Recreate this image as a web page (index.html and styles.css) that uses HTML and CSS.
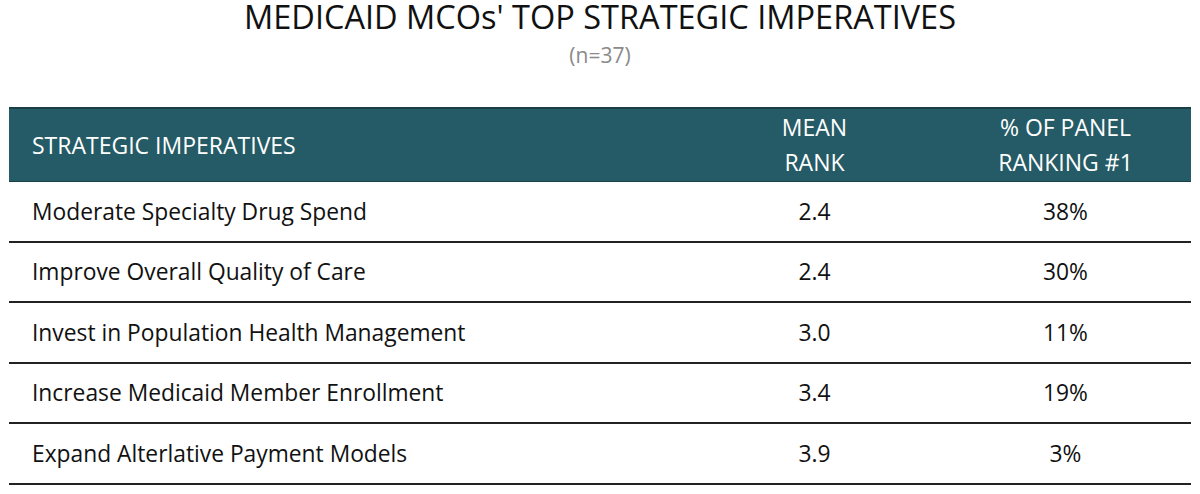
FILE: index.html
```html
<!DOCTYPE html>
<html>
<head>
<meta charset="utf-8">
<link rel="stylesheet" href="styles.css">
</head>
<body>
<div class="page">
  <h1 class="title">MEDICAID MCOs' TOP STRATEGIC IMPERATIVES</h1>
  <div class="subtitle">(n=37)</div>
  <div class="table">
    <div class="row head">
      <div class="c1">STRATEGIC IMPERATIVES</div>
      <div class="c2">MEAN<br>RANK</div>
      <div class="c3">% OF PANEL<br>RANKING #1</div>
    </div>
    <div class="row body">
      <div class="c1">Moderate Specialty Drug Spend</div>
      <div class="c2">2.4</div>
      <div class="c3">38%</div>
    </div>
    <div class="row body">
      <div class="c1">Improve Overall Quality of Care</div>
      <div class="c2">2.4</div>
      <div class="c3">30%</div>
    </div>
    <div class="row body">
      <div class="c1">Invest in Population Health Management</div>
      <div class="c2">3.0</div>
      <div class="c3">11%</div>
    </div>
    <div class="row body">
      <div class="c1">Increase Medicaid Member Enrollment</div>
      <div class="c2">3.4</div>
      <div class="c3">19%</div>
    </div>
    <div class="row body">
      <div class="c1">Expand Alterlative Payment Models</div>
      <div class="c2">3.9</div>
      <div class="c3">3%</div>
    </div>
  </div>
</div>
</body>
</html>
```

FILE: styles.css
```css
html, body {
  margin: 0;
  padding: 0;
  background: #ffffff;
}
.page {
  font-family: "Open Sans", "Liberation Sans", sans-serif;
  color: #111111;
}
.title {
  margin: 0;
  font-weight: 400;
  font-size: 32.5px;
  line-height: 34px;
  text-align: center;
  color: #111111;
}
.subtitle {
  margin-top: 8px;
  font-size: 21px;
  line-height: 26px;
  text-align: center;
  color: #8a8a8a;
}
.table {
  margin: 39px 0 0 9px;
  width: 1182px;
}
.row {
  display: grid;
  grid-template-columns: 680px 251px 251px;
  align-items: center;
  box-sizing: border-box;
  font-size: 22.8px;
  line-height: 26px;
}
.head {
  height: 75px;
  background: #255b66;
  color: #ffffff;
  border-top: 2px solid #1b3f46;
  border-bottom: 1px solid #1b3f46;
  font-size: 23px;
  line-height: 35px;
}
.body {
  height: 60.5px;
  border-bottom: 2px solid #222222;
  padding-top: 1px;
}
.c1 {
  padding-left: 23px;
}
.c2, .c3 {
  text-align: center;
}
```
